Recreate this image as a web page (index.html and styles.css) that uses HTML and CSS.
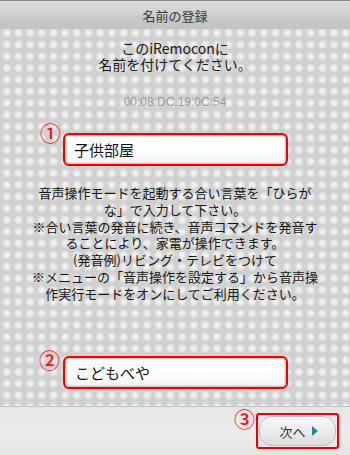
FILE: index.html
```html
<!DOCTYPE html>
<html lang="ja">
<head>
<meta charset="utf-8">
<link rel="stylesheet" href="styles.css">
</head>
<body>
<div class="screen">
  <header class="titlebar">名前の登録</header>
  <main class="content">
    <p class="intro">このiRemoconに<br>名前を付けてください。</p>
    <p class="mac">00:08:DC:19:0C:54</p>
    <div class="field field-name">
      <span class="mark mark-1">①</span>
      <div class="input">子供部屋</div>
    </div>
    <p class="help">音声操作モードを起動する合い言葉を「ひらが<br>な」で入力して下さい。<br>※合い言葉の発音に続き、音声コマンドを発音す<br>ることにより、家電が操作できます。<br>(発音例)リビング・テレビをつけて<br>※メニューの「音声操作を設定する」から音声操<br>作実行モードをオンにしてご利用ください。</p>
    <div class="field field-word">
      <span class="mark mark-2">②</span>
      <div class="input">こどもべや</div>
    </div>
  </main>
  <footer class="footer">
    <div class="next-wrap">
      <span class="mark mark-3">③</span>
      <div class="next-box">
        <div class="next-btn">次へ<span class="arrow"></span></div>
      </div>
    </div>
  </footer>
</div>
</body>
</html>
```
FILE: styles.css
```css
html, body {
  margin: 0;
  padding: 0;
}
body {
  font-family: "Noto Sans CJK JP", "Noto Sans", "Liberation Sans", sans-serif;
  color: #1e1e1e;
  background: #d4d4d4;
}
.screen {
  width: 350px;
  height: 455px;
  display: flex;
  flex-direction: column;
  overflow: hidden;
}
.titlebar {
  height: 28px;
  border-top: 1px solid #8a8a8a;
  background: linear-gradient(180deg, #dadada 0%, #d2d2d2 45%, #c7c7c7 60%, #c3c3c3 100%);
  display: flex;
  align-items: center;
  justify-content: center;
  font-size: 13px;
  color: #3a3a3a;
  line-height: 1;
}
.content {
  height: 378px;
  box-sizing: border-box;
  background-color: #d0d0d0;
  background-image: radial-gradient(circle, #f4f4f4 0px, #eeeeee 2px, rgba(236,236,236,0.7) 3.2px, rgba(220,220,220,0.3) 4.5px, rgba(208,208,208,0) 5.6px);
  background-size: 11.7px 11.7px;
  background-position: 0.9px -1.9px;
  display: flex;
  flex-direction: column;
  align-items: center;
  padding-top: 11px;
  border-bottom: 1px solid #c4c4c4;
}
.intro {
  margin: 0;
  font-size: 14px;
  line-height: 16px;
  text-align: center;
  color: #1a1a1a;
}
.mac {
  margin: 22px 0 0;
  font-family: "Liberation Sans", "Noto Sans", sans-serif;
  font-size: 12px;
  line-height: 16px;
  color: #9a9a9a;
}
.field {
  position: relative;
  align-self: stretch;
  padding-left: 63px;
}
.field-name {
  margin-top: 23px;
}
.field-word {
  margin-top: 53px;
}
.input {
  width: 225px;
  height: 33px;
  box-sizing: border-box;
  border: 2px solid #f00000;
  border-radius: 6px;
  background: linear-gradient(180deg, #fbfbfb 0%, #ffffff 40%, #f4f4f4 100%);
  box-shadow: inset 0 0 2px 1px #b8b8b8;
  display: flex;
  align-items: center;
  padding-left: 9px;
  font-size: 15px;
  color: #111;
}
.field-word .input {
  padding-left: 10px;
}
.mark {
  position: absolute;
  color: #ff1010;
  font-size: 21px;
  font-weight: 500;
  line-height: 20px;
}
.mark-1 {
  left: 40px;
  top: -11px;
}
.mark-2 {
  left: 39px;
  top: -7px;
}
.help {
  margin: 19px 0 0;
  font-size: 13px;
  line-height: 16.8px;
  text-align: center;
  color: #151515;
  white-space: nowrap;
}
.footer {
  flex: 1;
  background: linear-gradient(180deg, #e6e6e6 0%, #ececec 50%, #e4e4e4 100%);
  display: flex;
  justify-content: flex-end;
  padding-right: 11px;
}
.next-wrap {
  position: relative;
  margin-top: 6px;
}
.mark-3 {
  left: -22px;
  top: -5px;
}
.next-box {
  width: 83px;
  height: 36px;
  box-sizing: border-box;
  border: 2px solid #f00000;
  border-radius: 3px;
  padding: 1px;
}
.next-btn {
  height: 100%;
  box-sizing: border-box;
  border: 1px solid #c2c2c2;
  border-radius: 13px;
  background: linear-gradient(180deg, #f7f7f7 0%, #ececec 50%, #dcdcdc 100%);
  display: flex;
  align-items: center;
  justify-content: center;
  gap: 6px;
  font-size: 13px;
  color: #333;
  padding-left: 2px;
}
.arrow {
  width: 0;
  height: 0;
  border-top: 5px solid transparent;
  border-bottom: 5px solid transparent;
  border-left: 6px solid #1c8a9c;
}
```
